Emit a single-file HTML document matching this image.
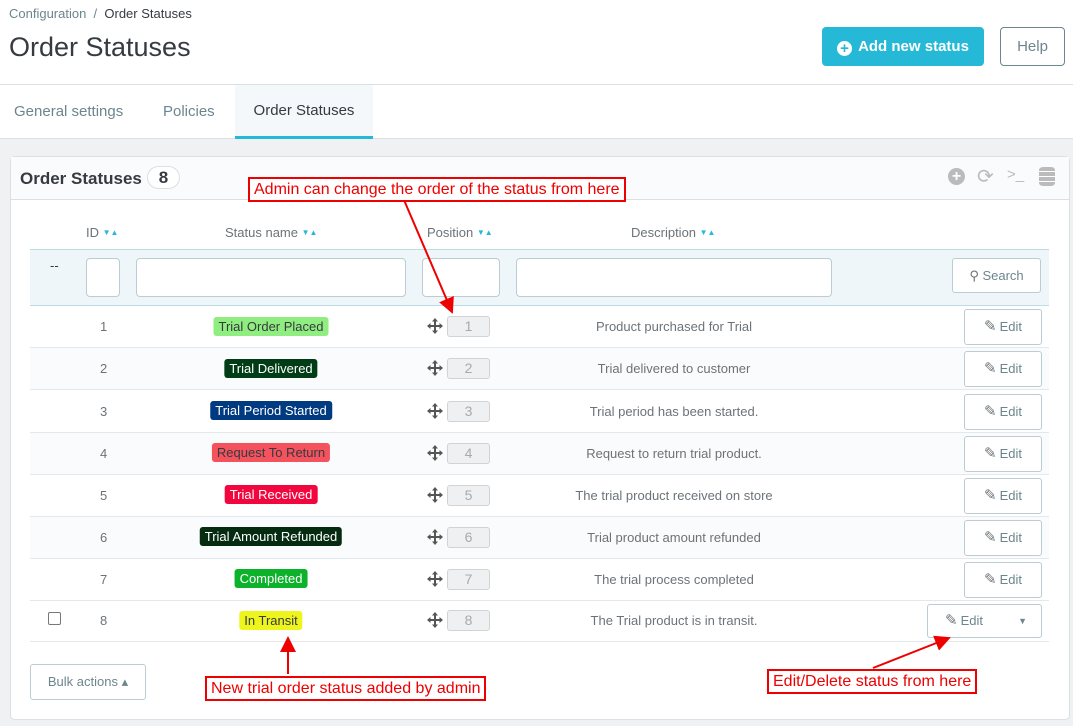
<!DOCTYPE html>
<html><head><meta charset="utf-8"><style>
*{box-sizing:border-box;margin:0;padding:0}
body{width:1073px;height:726px;position:relative;overflow:hidden;background:#eff1f2;font-family:"Liberation Sans","DejaVu Sans",sans-serif;color:#363a41}
.a{position:absolute}
.top{left:0;top:0;width:1073px;height:139px;background:#fff;border-bottom:1px solid #dbe0e2}
.badge{position:absolute;transform:translateX(-50%);font-size:13px;padding:2px 5px;border-radius:3px;white-space:nowrap;line-height:15px}
.row{position:absolute;left:30px;width:1019px;height:42px;border-bottom:1px solid #e4e8ea}
.t{font-size:13px;color:#6c7378}
.pos{position:absolute;left:447px;width:43px;height:21px;border:1px solid #d0d4d6;background:#eef0f1;border-radius:3px;text-align:center;color:#a6abae;font-size:14px;line-height:19px}
.mv{position:absolute;left:427px;width:16px;height:16px}
.edit{position:absolute;left:964px;width:78px;height:36px;border:1px solid #bbcdd2;border-radius:3px;background:#fff;font-size:13px;color:#6c868e;text-align:center;line-height:34px}
.edit i{font-style:normal;color:#6c7378;font-size:15px;margin-right:3px}
.inp{position:absolute;top:258px;height:39px;border:1px solid #bbcdd2;border-radius:4px;background:#fff}
.note{position:absolute;border:2px solid #e00;background:#fff;color:#e00;font-family:"Liberation Sans",sans-serif;font-size:16px;padding:1px 4px;line-height:19px;white-space:nowrap}
.hd{position:absolute;top:225px;font-size:13px;color:#6c7378}
.hd b{color:#25b9d7;font-size:8px;font-weight:normal;vertical-align:2px}
</style></head><body>
<div class="a top"></div>
<div class="a" style="left:9px;top:6px;font-size:13px;color:#6c868e">Configuration &nbsp;/&nbsp; <span style="color:#363a41">Order Statuses</span></div>
<div class="a" style="left:9px;top:32px;font-size:27px;color:#363a41">Order Statuses</div>
<div class="a" style="left:822px;top:27px;width:162px;height:39px;background:#25b9d7;border-radius:4px;color:#fff;font-size:15px;font-weight:bold;line-height:39px;text-align:center"><span style="display:inline-block;width:15px;height:15px;border-radius:50%;background:#fff;color:#25b9d7;font-size:15px;line-height:15px;vertical-align:-2px;margin-right:6px">+</span>Add new status</div>
<div class="a" style="left:1000px;top:27px;width:65px;height:39px;border:1px solid #6c868e;border-radius:4px;color:#6c868e;font-size:15px;line-height:37px;text-align:center">Help</div>
<div class="a" style="left:0;top:84px;width:1073px;border-top:1px solid #dbe0e2"></div>
<div class="a" style="left:14px;top:103px;font-size:15px;color:#6c868e">General settings</div>
<div class="a" style="left:163px;top:103px;font-size:15px;color:#6c868e">Policies</div>
<div class="a" style="left:235px;top:85px;width:138px;height:54px;background:#f4f8fa;border-bottom:3px solid #25b9d7;font-size:15px;color:#363a41;text-align:center;line-height:51px">Order Statuses</div>

<div class="a" style="left:10px;top:156px;width:1060px;height:564px;background:#fff;border:1px solid #dbe0e2;border-radius:5px"></div>
<div class="a" style="left:11px;top:157px;width:1058px;height:43px;background:#fafbfc;border-bottom:1px solid #dbe0e2"></div>
<div class="a" style="left:20px;top:169px;font-size:17px;font-weight:bold;color:#363a41">Order Statuses</div>
<div class="a" style="left:147px;top:166px;width:33px;height:23px;border:1px solid #dbe0e2;border-radius:12px;font-size:17px;font-weight:bold;text-align:center;line-height:21px;background:#fff">8</div>
<div class="a" style="left:948px;top:168px;width:17px;height:17px;border-radius:50%;background:#bbb;color:#fff;font-size:16px;line-height:17px;text-align:center;font-weight:bold">+</div>
<div class="a" style="left:977px;top:164px;font-size:20px;color:#bbb;font-family:'DejaVu Sans'">⟳</div>
<div class="a" style="left:1007px;top:166px;font-size:15px;color:#bbb">&gt;_</div>
<div class="a" style="left:1039px;top:167px;width:16px;height:19px;border-radius:4px/3px;background:repeating-linear-gradient(#bbb 0 4px,#fff 4px 5px)"></div>

<div class="hd" style="left:86px">ID <b>▼▲</b></div>
<div class="hd" style="left:225px">Status name <b>▼▲</b></div>
<div class="hd" style="left:427px">Position <b>▼▲</b></div>
<div class="hd" style="left:631px">Description <b>▼▲</b></div>

<div class="a" style="left:30px;top:249px;width:1019px;height:57px;background:#eff6f9;border-top:1px solid #bbdbe6;border-bottom:1px solid #bbdbe6"></div>
<div class="a" style="left:50px;top:258px;font-size:13px;color:#363a41">--</div>
<div class="inp" style="left:86px;width:34px"></div>
<div class="inp" style="left:136px;width:270px"></div>
<div class="inp" style="left:422px;width:78px"></div>
<div class="inp" style="left:516px;width:316px"></div>
<div class="a" style="left:952px;top:258px;width:89px;height:35px;border:1px solid #bbcdd2;border-radius:3px;background:#fff;font-size:13px;color:#6c868e;text-align:center;line-height:33px"><b style="color:#6c7378">&#9906;</b> Search</div>

<div class="row" style="top:306px"></div><div class="row" style="top:348px;background:#fafbfc"></div><div class="row" style="top:391px"></div><div class="row" style="top:433px;background:#fafbfc"></div><div class="row" style="top:475px"></div><div class="row" style="top:517px;background:#fafbfc"></div><div class="row" style="top:559px"></div><div class="row" style="top:601px;height:41px"></div>

<div class="a t" style="left:100px;top:319px">1</div><div class="badge" style="left:271px;top:317px;background:#90ee80;color:#363a41">Trial Order Placed</div>
<div class="a t" style="left:100px;top:361px">2</div><div class="badge" style="left:271px;top:359px;background:#003d16;color:#fff">Trial Delivered</div>
<div class="a t" style="left:100px;top:404px">3</div><div class="badge" style="left:271px;top:401px;background:#003a80;color:#fff">Trial Period Started</div>
<div class="a t" style="left:100px;top:446px">4</div><div class="badge" style="left:271px;top:443px;background:#f4525c;color:#363a41">Request To Return</div>
<div class="a t" style="left:100px;top:488px">5</div><div class="badge" style="left:271px;top:485px;background:#f2063e;color:#fff">Trial Received</div>
<div class="a t" style="left:100px;top:530px">6</div><div class="badge" style="left:271px;top:527px;background:#052c10;color:#fff">Trial Amount Refunded</div>
<div class="a t" style="left:100px;top:572px">7</div><div class="badge" style="left:271px;top:569px;background:#0cb22a;color:#fff">Completed</div>
<div class="a" style="left:48px;top:612px;width:13px;height:13px;border:1px solid #777;border-radius:2px;background:#fff"></div>
<div class="a t" style="left:100px;top:613px">8</div><div class="badge" style="left:271px;top:611px;background:#eef51c;color:#363a41">In Transit</div>

<svg width="0" height="0" style="position:absolute"><defs><g id="mv" fill="#555"><path d="M8 0L11 3.5H9V7H12.5V5L16 8L12.5 11V9H9V12.5H11L8 16L5 12.5H7V9H3.5V11L0 8L3.5 5V7H7V3.5H5Z"/></g></defs></svg>
<svg class="mv" style="top:318px" viewBox="0 0 16 16"><use href="#mv"/></svg><div class="pos" style="top:316px">1</div>
<svg class="mv" style="top:360px" viewBox="0 0 16 16"><use href="#mv"/></svg><div class="pos" style="top:358px">2</div>
<svg class="mv" style="top:403px" viewBox="0 0 16 16"><use href="#mv"/></svg><div class="pos" style="top:401px">3</div>
<svg class="mv" style="top:445px" viewBox="0 0 16 16"><use href="#mv"/></svg><div class="pos" style="top:443px">4</div>
<svg class="mv" style="top:487px" viewBox="0 0 16 16"><use href="#mv"/></svg><div class="pos" style="top:485px">5</div>
<svg class="mv" style="top:529px" viewBox="0 0 16 16"><use href="#mv"/></svg><div class="pos" style="top:527px">6</div>
<svg class="mv" style="top:571px" viewBox="0 0 16 16"><use href="#mv"/></svg><div class="pos" style="top:569px">7</div>
<svg class="mv" style="top:612px" viewBox="0 0 16 16"><use href="#mv"/></svg><div class="pos" style="top:610px">8</div>

<div class="a t" style="left:524px;width:300px;text-align:center;top:319px">Product purchased for Trial</div>
<div class="a t" style="left:524px;width:300px;text-align:center;top:361px">Trial delivered to customer</div>
<div class="a t" style="left:524px;width:300px;text-align:center;top:404px">Trial period has been started.</div>
<div class="a t" style="left:524px;width:300px;text-align:center;top:446px">Request to return trial product.</div>
<div class="a t" style="left:524px;width:300px;text-align:center;top:488px">The trial product received on store</div>
<div class="a t" style="left:524px;width:300px;text-align:center;top:530px">Trial product amount refunded</div>
<div class="a t" style="left:524px;width:300px;text-align:center;top:572px">The trial process completed</div>
<div class="a t" style="left:524px;width:300px;text-align:center;top:613px">The Trial product is in transit.</div>

<div class="edit" style="top:309px"><i>✎</i>Edit</div>
<div class="edit" style="top:351px"><i>✎</i>Edit</div>
<div class="edit" style="top:394px"><i>✎</i>Edit</div>
<div class="edit" style="top:436px"><i>✎</i>Edit</div>
<div class="edit" style="top:478px"><i>✎</i>Edit</div>
<div class="edit" style="top:520px"><i>✎</i>Edit</div>
<div class="edit" style="top:562px"><i>✎</i>Edit</div>
<div class="edit" style="top:604px;left:927px;width:115px;height:34px;line-height:32px;text-align:left;padding-left:17px"><i>✎</i>Edit<span style="position:absolute;right:14px;font-size:9px">▼</span></div>

<div class="a" style="left:30px;top:664px;width:116px;height:36px;border:1px solid #bbcdd2;border-radius:3px;background:#fff;font-size:13px;color:#6c868e;text-align:center;line-height:34px">Bulk actions ▴</div>

<svg class="a" style="left:0;top:0" width="1073" height="726">
<defs><marker id="m" markerWidth="8" markerHeight="8" refX="7" refY="4" orient="auto"><path d="M0,0 L8,4 L0,8z" fill="#e00"/></marker></defs>
<line x1="404" y1="200" x2="452" y2="312" stroke="#e00" stroke-width="2" marker-end="url(#m)"/>
<line x1="288" y1="674" x2="288" y2="638" stroke="#e00" stroke-width="2" marker-end="url(#m)"/>
<line x1="873" y1="668" x2="949" y2="638" stroke="#e00" stroke-width="2" marker-end="url(#m)"/>
</svg>
<div class="note" style="left:248px;top:177px">Admin can change the order of the status from here</div>
<div class="note" style="left:205px;top:676px">New trial order status added by admin</div>
<div class="note" style="left:767px;top:669px">Edit/Delete status from here</div>
</body></html>
